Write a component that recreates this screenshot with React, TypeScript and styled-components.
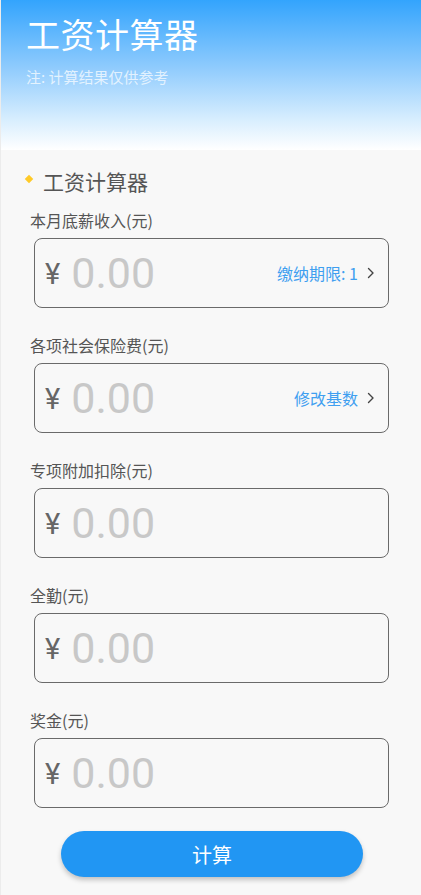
import React, { useState } from "react";
import styled, { createGlobalStyle } from "styled-components";

const GlobalStyle = createGlobalStyle`
  html, body {
    margin: 0;
    padding: 0;
    background: #f8f8f8;
  }
  body {
    font-family: "Noto Sans CJK SC", "Noto Sans", Roboto, sans-serif;
  }
`;

type Field = {
    label: string;
    action?: string;
};

const fields: Field[] = [
    { label: "本月底薪收入(元)", action: "缴纳期限: 1" },
    { label: "各项社会保险费(元)", action: "修改基数" },
    { label: "专项附加扣除(元)" },
    { label: "全勤(元)" },
    { label: "奖金(元)" },
];

const Chevron: React.FC = () => (
    <svg width="8" height="12" viewBox="0 0 8 12" fill="none">
        <path d="M1.5 1.5 L6 6 L1.5 10.5" stroke="#444" strokeWidth="1.4" strokeLinecap="round" strokeLinejoin="round" />
    </svg>
);

const App: React.FC = () => {
    const [values, setValues] = useState<string[]>(fields.map(() => ""));

    const update = (i: number, v: string) => {
        const next = [...values];
        next[i] = v;
        setValues(next);
    };

    return (
        <Page>
            <GlobalStyle />
            <Header>
                <Title>工资计算器</Title>
                <Note>注: 计算结果仅供参考</Note>
            </Header>
            <Body>
                <SectionTitle>
                    <Diamond />
                    工资计算器
                </SectionTitle>
                {fields.map((f, i) => (
                    <FieldBlock key={f.label}>
                        <Label>{f.label}</Label>
                        <InputBox>
                            <Currency>¥</Currency>
                            <Amount
                                placeholder="0.00"
                                value={values[i]}
                                onChange={(e) => update(i, e.target.value)}
                            />
                            {f.action && (
                                <Action>
                                    {f.action}
                                    <Chevron />
                                </Action>
                            )}
                        </InputBox>
                    </FieldBlock>
                ))}
                <ButtonRow>
                    <CalcButton>计算</CalcButton>
                </ButtonRow>
            </Body>
        </Page>
    );
};

const Page = styled.div`
  width: 421px;
  min-height: 895px;
  background: #f8f8f8;
  border-left: 1px solid #ececec;
  box-sizing: border-box;
`;

const Header = styled.div`
  height: 150px;
  padding: 12px 0 0 25px;
  box-sizing: border-box;
  background: linear-gradient(180deg, #33a4fd 0%, #8fcbfd 45%, #d8eefe 80%, #ffffff 100%);
`;

const Title = styled.div`
  color: #fff;
  font-size: 34px;
  line-height: 44px;
  font-weight: 400;
  letter-spacing: 0.5px;
`;

const Note = styled.div`
  margin-top: 11px;
  color: rgba(255, 255, 255, 0.72);
  font-size: 15px;
  line-height: 20px;
`;

const Body = styled.div`
  padding: 17px 0 0 29px;
`;

const SectionTitle = styled.div`
  display: flex;
  align-items: center;
  gap: 11px;
  color: #555;
  font-size: 21px;
  line-height: 28px;
  margin-left: -4px;
`;

const Diamond = styled.span`
  width: 6px;
  height: 6px;
  background: #ffca28;
  transform: rotate(45deg);
  margin-top: -4px;
`;

const FieldBlock = styled.div`
  margin-top: 14px;
  & + & {
    margin-top: 26px;
  }
`;

const Label = styled.div`
  color: #555;
  font-size: 16px;
  line-height: 22px;
  margin-bottom: 7px;
`;

const InputBox = styled.div`
  display: flex;
  align-items: center;
  width: 355px;
  height: 70px;
  margin-left: 4px;
  padding: 0 13px 0 10px;
  box-sizing: border-box;
  border: 1px solid #6a6a6a;
  border-radius: 8px;
`;

const Currency = styled.span`
  color: #666;
  font-size: 29px;
  font-family: Roboto, "Liberation Sans", sans-serif;
  margin-right: 11px;
  margin-top: 2px;
`;

const Amount = styled.input`
  flex: 1;
  min-width: 0;
  border: none;
  outline: none;
  background: transparent;
  padding: 0;
  font-family: Roboto, "Liberation Sans", sans-serif;
  font-size: 43px;
  font-weight: 400;
  color: #333;
  &::placeholder {
    color: #c8c8c8;
  }
`;

const Action = styled.span`
  display: flex;
  align-items: center;
  gap: 9px;
  color: #3f9ff0;
  font-size: 16px;
  white-space: nowrap;
`;

const ButtonRow = styled.div`
  display: flex;
  padding: 23px 0 0 31px;
`;

const CalcButton = styled.button`
  width: 302px;
  height: 46px;
  border: none;
  border-radius: 23px;
  background: #2196f3;
  color: #fff;
  font-family: "Noto Sans CJK SC", sans-serif;
  font-size: 20px;
  box-shadow: 0 3px 5px rgba(0, 0, 0, 0.22);
  cursor: pointer;
`;

export default App;
